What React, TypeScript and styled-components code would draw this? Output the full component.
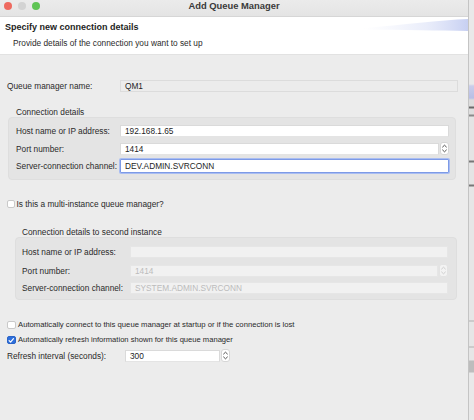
import React from "react";
import styled, { createGlobalStyle } from "styled-components";

const Global = createGlobalStyle`
  html, body { margin: 0; padding: 0; }
  body {
    width: 474px; height: 420px; overflow: hidden;
    background: #ececec;
    font-family: "Liberation Sans", Arial, sans-serif;
    color: #262626;
  }
  * { box-sizing: border-box; }
`;

const Screen = styled.div`
  display: flex;
  width: 474px;
  height: 420px;
`;

const Window = styled.div`
  width: 469px;
  display: flex;
  flex-direction: column;
  background: #ececec;
  border-right: 1px solid #c4c4c4;
`;

const BackStrip = styled.div`
  flex: 1;
  background: linear-gradient(
    #e9e9e9 0px, #e9e9e9 84px,
    #c9cdea 86px, #b9bfe6 98px,
    #dcdcdc 100px, #dcdcdc 106px,
    #6a6a6a 107px, #6a6a6a 108px,
    #dedede 109px, #dedede 114px,
    #8a8a8a 115px, #8a8a8a 116px,
    #e4e4e4 117px, #e4e4e4 160px,
    #777 161px, #777 162px,
    #e4e4e4 163px, #e4e4e4 184px,
    #777 185px, #777 186px,
    #e6e6e6 187px, #e6e6e6 320px,
    #b0b0b0 321px, #e6e6e6 322px, #e6e6e6 346px,
    #b0b0b0 347px, #e6e6e6 348px, #e6e6e6 360px,
    #bdbdbd 361px, #bdbdbd 372px,
    #e9e9e9 373px
  );
`;

const TitleBar = styled.div`
  height: 17px;
  display: grid;
  grid-template-columns: 1fr auto 1fr;
  align-items: start;
  background: linear-gradient(#ebebeb, #e4e4e4);
  border-bottom: 1px solid #d6d6d6;
`;

const Lights = styled.div`
  display: flex;
  gap: 6px;
  padding: 2px 0 0 3.5px;
`;

const Light = styled.span<{ $color: string }>`
  width: 8px;
  height: 8px;
  border-radius: 50%;
  background: ${(p) => p.$color};
`;

const WindowTitle = styled.div`
  font-size: 9.4px;
  font-weight: 700;
  line-height: 10px;
  padding-top: 1px;
  color: #3a3a3a;
`;

const Header = styled.div`
  position: relative;
  height: 38px;
  background: #ffffff;
  padding: 5px 0 0 5px;
  border-bottom: 1px solid #e2e2e2;
  overflow: hidden;
`;

const HeaderTitle = styled.div`
  font-size: 9px;
  font-weight: 700;
  line-height: 11px;
  color: #1e1e1e;
`;

const HeaderDesc = styled.div`
  font-size: 8.3px;
  line-height: 10px;
  margin: 5px 0 0 8px;
  color: #2a2a2a;
`;

const Banner = styled.svg`
  position: absolute;
  top: 0;
  right: 0;
`;

const Body = styled.div`
  display: flex;
  flex-direction: column;
  padding: 25px 10px 0 7px;
`;

const FormRow = styled.div<{ $labelWidth: number; $top?: number }>`
  display: grid;
  grid-template-columns: ${(p) => p.$labelWidth}px 1fr;
  align-items: center;
  height: 12px;
  margin-top: ${(p) => p.$top ?? 0}px;
`;

const Label = styled.span<{ $size?: number }>`
  font-size: ${(p) => p.$size ?? 8.3}px;
  line-height: 10px;
  white-space: nowrap;
  color: #2a2a2a;
`;

const FieldLine = styled.div`
  display: flex;
  align-items: center;
  gap: 1px;
`;

type FieldKind = "normal" | "readonly" | "focused" | "disabled";

const Field = styled.div<{ $kind: FieldKind; $width?: number }>`
  ${(p) => (p.$width ? `width: ${p.$width}px;` : "flex: 1;")}
  height: ${(p) => (p.$kind === "focused" ? 14 : 12)}px;
  display: flex;
  align-items: center;
  padding-left: 4px;
  font-size: 8.3px;
  line-height: 10px;
  white-space: nowrap;
  color: ${(p) => (p.$kind === "disabled" ? "#bcbcbc" : "#1e1e1e")};
  background: ${(p) =>
    p.$kind === "readonly" ? "#ececec" : p.$kind === "disabled" ? "#f1f1f1" : "#ffffff"};
  border: 1px solid
    ${(p) =>
      p.$kind === "focused"
        ? "#7d9ae6"
        : p.$kind === "disabled"
        ? "#e6e6e6"
        : p.$kind === "readonly"
        ? "#dcdcdc"
        : "#dadada"};
  ${(p) => (p.$kind === "focused" ? "box-shadow: 0 0 0 1px #a9bdf2; border-radius: 1px;" : "")}
  ${(p) => (p.$kind === "normal" ? "border-bottom-color: #e4e4e4;" : "")}
`;

const GroupLabel = styled.div<{ $indent: number; $top: number }>`
  font-size: 8.3px;
  line-height: 10px;
  margin: ${(p) => p.$top}px 0 0 ${(p) => p.$indent}px;
  color: #2a2a2a;
`;

const Group = styled.div<{ $ml: number; $mr: number; $pad: string; $gap: number }>`
  display: flex;
  flex-direction: column;
  gap: ${(p) => p.$gap}px;
  margin: 0 ${(p) => p.$mr}px 0 ${(p) => p.$ml}px;
  padding: ${(p) => p.$pad};
  background: #e4e4e4;
  border: 1px solid #dedede;
  border-radius: 4px;
`;

const CheckRow = styled.label<{ $top: number; $gap: number }>`
  display: flex;
  align-items: center;
  gap: ${(p) => p.$gap}px;
  height: 10px;
  margin-top: ${(p) => p.$top}px;
`;

const Box = styled.span<{ $checked?: boolean; $size: number }>`
  width: ${(p) => p.$size}px;
  height: ${(p) => p.$size}px;
  border-radius: 2px;
  display: flex;
  align-items: center;
  justify-content: center;
  background: ${(p) => (p.$checked ? "#2e6fdc" : "#ffffff")};
  border: 1px solid ${(p) => (p.$checked ? "#2a63c6" : "#c9c9c9")};
`;

const Spinner = ({ disabled }: { disabled?: boolean }) => (
  <svg width="9" height="13" viewBox="0 0 9 13">
    <rect x="0.5" y="0.5" width="8" height="12" rx="2.5" fill={disabled ? "#f3f3f3" : "#ffffff"} stroke={disabled ? "#e3e3e3" : "#d6d6d6"} />
    <path d="M2.6 5 L4.5 3.2 L6.4 5" fill="none" stroke={disabled ? "#c8c8c8" : "#3c3c3c"} strokeWidth="0.9" strokeLinecap="round" strokeLinejoin="round" />
    <path d="M2.6 8 L4.5 9.8 L6.4 8" fill="none" stroke={disabled ? "#c8c8c8" : "#3c3c3c"} strokeWidth="0.9" strokeLinecap="round" strokeLinejoin="round" />
  </svg>
);

const Check = () => (
  <svg width="7" height="7" viewBox="0 0 7 7">
    <path d="M1.2 3.7 L2.8 5.3 L5.9 1.6" fill="none" stroke="#fff" strokeWidth="1.3" strokeLinecap="round" strokeLinejoin="round" />
  </svg>
);

export default function App() {
  return (
    <>
      <Global />
      <Screen>
        <Window>
          <TitleBar>
            <Lights>
              <Light $color="#ee6a5f" />
              <Light $color="#d3d3d3" />
              <Light $color="#5fc454" />
            </Lights>
            <WindowTitle>Add Queue Manager</WindowTitle>
            <span />
          </TitleBar>
          <Header>
            <Banner width="104" height="18" viewBox="0 0 104 18">
              <defs>
                <linearGradient id="bn" x1="0" y1="0" x2="1" y2="0">
                  <stop offset="0" stopColor="#e4e8f9" stopOpacity="0" />
                  <stop offset="0.6" stopColor="#dbe1f7" stopOpacity="0.6" />
                  <stop offset="1" stopColor="#c4cdf1" stopOpacity="0.95" />
                </linearGradient>
              </defs>
              <path d="M0 11 C40 8 75 3 104 2 L104 14 C75 13.5 40 13 0 12.5 Z" fill="url(#bn)" />
            </Banner>
            <HeaderTitle>Specify new connection details</HeaderTitle>
            <HeaderDesc>Provide details of the connection you want to set up</HeaderDesc>
          </Header>
          <Body>
            <FormRow $labelWidth={113}>
              <Label>Queue manager name:</Label>
              <Field $kind="readonly">QM1</Field>
            </FormRow>

            <GroupLabel $indent={9} $top={15}>Connection details</GroupLabel>
            <Group $ml={1} $mr={2} $pad="7px 6px 8px 7px" $gap={5}>
              <FormRow $labelWidth={104}>
                <Label>Host name or IP address:</Label>
                <Field $kind="normal">192.168.1.65</Field>
              </FormRow>
              <FormRow $labelWidth={104}>
                <Label>Port number:</Label>
                <FieldLine>
                  <Field $kind="normal">1414</Field>
                  <Spinner />
                </FieldLine>
              </FormRow>
              <FormRow $labelWidth={104}>
                <Label>Server-connection channel:</Label>
                <Field $kind="focused">DEV.ADMIN.SVRCONN</Field>
              </FormRow>
            </Group>

            <CheckRow $top={19} $gap={1.5}>
              <Box $size={8} />
              <Label>Is this a multi-instance queue manager?</Label>
            </CheckRow>

            <GroupLabel $indent={15} $top={18}>Connection details to second instance</GroupLabel>
            <Group $ml={8} $mr={1} $pad="8px 8px 5px 6px" $gap={6}>
              <FormRow $labelWidth={108}>
                <Label>Host name or IP address:</Label>
                <Field $kind="disabled"></Field>
              </FormRow>
              <FormRow $labelWidth={108}>
                <Label>Port number:</Label>
                <FieldLine>
                  <Field $kind="disabled">1414</Field>
                  <Spinner disabled />
                </FieldLine>
              </FormRow>
              <FormRow $labelWidth={108}>
                <Label>Server-connection channel:</Label>
                <Field $kind="disabled">SYSTEM.ADMIN.SVRCONN</Field>
              </FormRow>
            </Group>

            <CheckRow $top={20} $gap={2.5}>
              <Box $size={8.5} />
              <Label $size={7.7}>Automatically connect to this queue manager at startup or if the connection is lost</Label>
            </CheckRow>
            <CheckRow $top={5} $gap={2.5}>
              <Box $checked $size={8.5}>
                <Check />
              </Box>
              <Label $size={7.6}>Automatically refresh information shown for this queue manager</Label>
            </CheckRow>
            <FormRow $labelWidth={118} $top={4}>
              <Label>Refresh interval (seconds):</Label>
              <FieldLine>
                <Field $kind="normal" $width={95}>300</Field>
                <Spinner />
              </FieldLine>
            </FormRow>
          </Body>
        </Window>
        <BackStrip />
      </Screen>
    </>
  );
}
